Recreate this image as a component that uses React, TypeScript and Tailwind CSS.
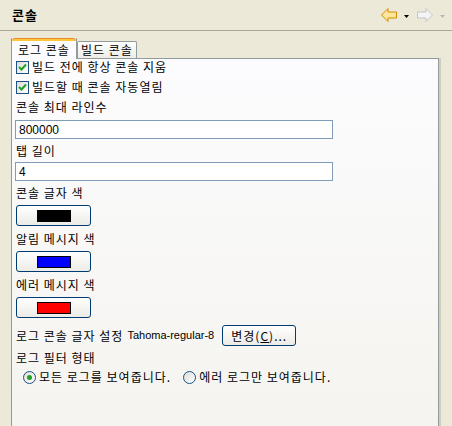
import React from "react";

const KR = { fontFamily: '"Noto Sans CJK KR", "Noto Sans", sans-serif', letterSpacing: "1px" };
const TAHOMA = { fontFamily: '"Liberation Sans", "DejaVu Sans", sans-serif' };

function Checkbox() {
  return (
    <span className="flex h-[13px] w-[13px] shrink-0 items-center justify-center border border-[#1c5180] bg-gradient-to-br from-[#dcdcd7] to-white">
      <svg width="9" height="9" viewBox="0 0 9 9">
        <path d="M1 4 L3.5 6.5 L8 1.5" fill="none" stroke="#21a121" strokeWidth="2" />
      </svg>
    </span>
  );
}

function Radio({ checked }: { checked?: boolean }) {
  return (
    <span className="flex h-[13px] w-[13px] shrink-0 items-center justify-center rounded-full border border-[#1c5180] bg-gradient-to-br from-[#dcdcd7] to-white">
      {checked && <span className="h-[5px] w-[5px] rounded-full bg-[#21a121]" />}
    </span>
  );
}

function ColorButton({ color, bordered }: { color: string; bordered?: boolean }) {
  return (
    <div className="flex h-[21px] w-[75px] items-center justify-center rounded-[3px] border border-[#003c74] bg-gradient-to-b from-white to-[#ecebe6]">
      <span
        className={`h-[12px] w-[34px] ${bordered ? "border border-black" : ""}`}
        style={{ backgroundColor: color }}
      />
    </div>
  );
}

function Label({ children, className = "" }: { children: React.ReactNode; className?: string }) {
  return (
    <div className={`flex h-[16px] items-center pl-[1px] text-[12px] leading-none text-black ${className}`} style={KR}>
      {children}
    </div>
  );
}

function TextInput({ value, className = "" }: { value: string; className?: string }) {
  return (
    <div
      className={`flex h-[19px] w-[318px] items-center border border-[#7f9db9] bg-white pl-[3px] text-[12px] text-black ${className}`}
      style={TAHOMA}
    >
      {value}
    </div>
  );
}

export default function App() {
  return (
    <div className="relative h-[426px] w-[452px] overflow-hidden bg-[#ece9d8]">
      {/* view title bar */}
      <div className="flex h-[31px] items-center justify-between border-b border-[#aca899] pl-[12px] pr-[7px]">
        <span className="text-[13px] font-bold text-black" style={KR}>
          콘솔
        </span>
        <div className="flex items-center">
          <svg width="16" height="14" viewBox="0 0 16 14">
            <path
              d="M0.5 7 L7 0.5 L7 4 L15.5 4 L15.5 10 L7 10 L7 13.5 Z"
              fill="#ffe69a"
              stroke="#d18c00"
              strokeWidth="1"
              strokeLinejoin="round"
            />
          </svg>
          <svg width="5" height="3" viewBox="0 0 5 3" className="ml-[7px] mt-[2px]">
            <path d="M0 0 L5 0 L2.5 3 Z" fill="#000" />
          </svg>
          <svg width="16" height="14" viewBox="0 0 16 14" className="ml-[8px]">
            <path
              d="M15.5 7 L9 0.5 L9 4 L0.5 4 L0.5 10 L9 10 L9 13.5 Z"
              fill="#f4f4f4"
              stroke="#c5c5c5"
              strokeWidth="1"
              strokeLinejoin="round"
            />
          </svg>
          <svg width="5" height="3" viewBox="0 0 5 3" className="ml-[7px] mt-[2px]">
            <path d="M0 0 L5 0 L2.5 3 Z" fill="#b8b8b8" />
          </svg>
        </div>
      </div>

      {/* tabs */}
      <div className="flex h-[27px] items-end pl-[11px] pt-[6px]">
        <div className="relative z-10 -mb-px flex h-[21px] w-[66px] flex-col border-x border-[#919b9c] bg-[#fcfcfe]">
          <div className="h-[3px] rounded-t-[3px] border-t border-[#e68b2c] bg-[#ffc83c]" />
          <div className="flex flex-1 items-center justify-center text-[12px] text-black" style={KR}>
            로그 콘솔
          </div>
        </div>
        <div
          className="flex h-[17px] w-[60px] items-center justify-center rounded-t-[2px] border-x border-t border-[#919b9c] bg-gradient-to-b from-white to-[#ecebe6] text-[12px] text-black"
          style={KR}
        >
          빌드 콘솔
        </div>
      </div>

      {/* panel */}
      <div className="ml-[11px] h-[400px] w-[428px] border-l border-r border-t border-[#919b9c] bg-gradient-to-b from-[#fcfcfe] to-[#f4f3ee] pl-[3px] shadow-[2px_0_0_#d0cebf]">
        <div className="flex h-[16px] items-center gap-[3px] pl-[1px] text-[12px]" style={KR}>
          <Checkbox />
          <span>빌드 전에 항상 콘솔 지움</span>
        </div>
        <div className="mt-[4px] flex h-[16px] items-center gap-[3px] pl-[1px] text-[12px]" style={KR}>
          <Checkbox />
          <span>빌드할 때 콘솔 자동열림</span>
        </div>
        <Label className="mt-[4px]">콘솔 최대 라인수</Label>
        <TextInput value="800000" className="mt-[5px]" />
        <Label className="mt-[4px]">탭 길이</Label>
        <TextInput value="4" className="mt-[3px]" />
        <Label className="mt-[4px]">콘솔 글자 색</Label>
        <div className="mt-[4px] pl-[1px]">
          <ColorButton color="#000000" />
        </div>
        <Label className="mt-[5px]">알림 메시지 색</Label>
        <div className="mt-[4px] pl-[1px]">
          <ColorButton color="#0000ff" bordered />
        </div>
        <Label className="mt-[5px]">에러 메시지 색</Label>
        <div className="mt-[4px] pl-[1px]">
          <ColorButton color="#ff0000" bordered />
        </div>
        <div className="mt-[7px] flex h-[21px] items-center pl-[1px]">
          <span className="text-[12px]" style={KR}>
            로그 콘솔 글자 설정
          </span>
          <span className="ml-[4px] text-[11px]" style={TAHOMA}>
            Tahoma-regular-8
          </span>
          <div
            className="ml-[8px] flex h-[21px] w-[74px] items-center justify-center rounded-[3px] border border-[#003c74] bg-gradient-to-b from-white to-[#ecebe6] text-[12px]"
            style={KR}
          >
            변경(<span className="underline">C</span>)...
          </div>
        </div>
        <Label className="mt-[4px]">로그 필터 형태</Label>
        <div className="mt-[3px] flex h-[16px] items-center pl-[8px] text-[12px]" style={KR}>
          <Radio checked />
          <span className="ml-[3px]">모든 로그를 보여줍니다.</span>
          <span className="ml-[12px]">
            <Radio />
          </span>
          <span className="ml-[3px]">에러 로그만 보여줍니다.</span>
        </div>
      </div>
    </div>
  );
}
